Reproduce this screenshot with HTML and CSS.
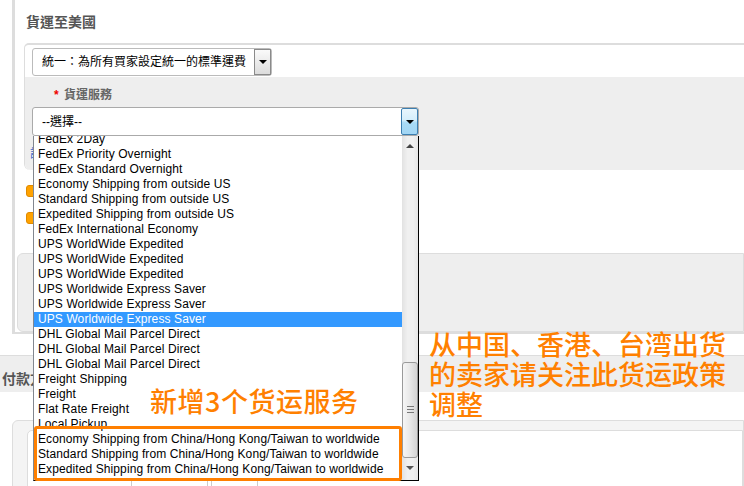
FILE: index.html
```html
<!DOCTYPE html>
<html>
<head>
	<meta charset="UTF-8" />
	<title>貨運設定</title>
	<link rel="stylesheet" href="styles.css">
</head>
<body>
<div id="wrap">

    <div id="ship_section">
        <div class="ship_head">貨運至美國</div>
        <div class="rate_box">
            <div class="rate_top">
                <div class="fake_select sel_type">
                    <span class="sel_text">統一：為所有買家設定統一的標準運費</span>
                    <span class="sel_btn"><i class="tri"></i></span>
                </div>
            </div>
            <div class="rate_body">
                <div class="field_label"><span class="req">*</span> 貨運服務</div>
                <div class="fake_select sel_service">
                    <span class="sel_text">--選擇--</span>
                    <span class="sel_btn sel_btn_on"><i class="tri"></i></span>

                    <div class="drop_list">
                        <ul class="drop_items">
                            <li>FedEx 2Day</li>
                            <li>FedEx Priority Overnight</li>
                            <li>FedEx Standard Overnight</li>
                            <li>Economy Shipping from outside US</li>
                            <li>Standard Shipping from outside US</li>
                            <li>Expedited Shipping from outside US</li>
                            <li>FedEx International Economy</li>
                            <li>UPS WorldWide Expedited</li>
                            <li>UPS WorldWide Expedited</li>
                            <li>UPS WorldWide Expedited</li>
                            <li>UPS Worldwide Express Saver</li>
                            <li>UPS Worldwide Express Saver</li>
                            <li class="on">UPS Worldwide Express Saver</li>
                            <li>DHL Global Mail Parcel Direct</li>
                            <li>DHL Global Mail Parcel Direct</li>
                            <li>DHL Global Mail Parcel Direct</li>
                            <li>Freight Shipping</li>
                            <li>Freight</li>
                            <li>Flat Rate Freight</li>
                            <li>Local Pickup</li>
                            <li>Economy Shipping from China/Hong Kong/Taiwan to worldwide</li>
                            <li>Standard Shipping from China/Hong Kong/Taiwan to worldwide</li>
                            <li>Expedited Shipping from China/Hong Kong/Taiwan to worldwide</li>
                        </ul>
                        <div class="scroll_bar">
                            <i class="arr_up"></i>
                            <div class="thumb"><b></b><b></b><b></b></div>
                            <i class="arr_down"></i>
                        </div>
                    </div>
                </div>
                <a class="add_link" href="#">設定更多運費</a>
            </div>
        </div>
        <div class="opt_rows">
            <div class="opt_row"><span class="opt_icon"></span></div>
            <div class="opt_row"><span class="opt_icon"></span></div>
        </div>
        <div class="grey_box"></div>
    </div>

    <div class="pay_head">付款方式</div>
    <div class="pay_box">
        <div class="pay_inner">
            <span class="pay_btn"></span>
            <span class="pay_btn pay_btn_s"></span>
        </div>
    </div>

    <div class="mark_box"></div>
    <div class="note note_new">新增3个货运服务</div>
    <div class="note note_tip">从中国、香港、台湾出货<br>的卖家请关注此货运政策<br>调整</div>

</div>
</body>
</html>
```

FILE: styles.css
```css
body{
    margin: 0;
    background: #fff;
    font-family: "Liberation Sans", "Noto Sans CJK TC", sans-serif;
    font-size: 12px;
    color: #000;
}

#wrap{
    position: relative;
    width: 744px;
    height: 486px;
    overflow: hidden;
}

#ship_section{
    margin-left: 12px;
    height: 332px;
    border-left: 3px solid #ddd;
    border-bottom: 2px solid #ddd;
    padding-left: 9px;
}

.ship_head{
    height: 29px;
    padding: 14px 0 0 2px;
    font-size: 14px;
    line-height: 16px;
    font-weight: bold;
    color: #555;
}

.rate_box{
    border-top: 2px solid #ddd;
    border-left: 1px solid #ddd;
    border-radius: 5px 0 0 6px;
}

.rate_top{
    height: 29px;
    padding: 3px 0 0 7px;
    background: #fff;
    border-top-left-radius: 5px;
}

.rate_body{
    height: 83px;
    padding: 10px 0 0 7px;
    background: #eee;
    border-bottom-left-radius: 6px;
}

.fake_select{
    display: flex;
    align-items: center;
    box-sizing: border-box;
    height: 28px;
    border: 1px solid #bbb;
    border-radius: 3px;
    background: #fff;
}

.sel_type{
    width: 240px;
}

.sel_service{
    position: relative;
    width: 387px;
    height: 29px;
    border-color: #aaa;
}

.sel_text{
    flex: 1;
    padding-left: 9px;
    line-height: 16px;
}

.sel_btn{
    display: flex;
    align-items: center;
    justify-content: center;
    box-sizing: border-box;
    width: 17px;
    height: 26px;
    border: 1px solid #8a8a8a;
    background: linear-gradient(#fafafa, #dcdcdc);
}

.sel_btn_on{
    height: 27px;
    border-color: #3c7fb1;
    border-radius: 2px;
    background: linear-gradient(#e8f6fd 0%, #d4eefb 45%, #a9dbf6 55%, #a2d6f4 100%);
}

.tri{
    width: 0;
    height: 0;
    border-left: 4px solid transparent;
    border-right: 4px solid transparent;
    border-top: 4px solid #000;
}

.field_label{
    height: 16px;
    margin: 0 0 4px 22px;
    font-size: 12px;
    line-height: 16px;
    font-weight: bold;
    color: #666;
}

.field_label .req{
    color: #e00;
    margin-right: 2px;
}

.add_link{
    display: block;
    margin: 10px 0 0 -2px;
    color: #36c;
    text-decoration: none;
    line-height: 16px;
}

/* dropdown list */
.drop_list{
    position: absolute;
    left: 0;
    top: 28px;
    width: 384px;
    height: 344px;
    border-left: 1px solid #828790;
    border-right: 1px solid #000;
    border-bottom: 1px solid #000;
    background: #fff;
    overflow: hidden;
    z-index: 5;
}

.drop_items{
    list-style: none;
    margin: -4px 16px 0 0;
    padding: 0;
}

.drop_items li{
    height: 15px;
    padding-left: 4px;
    line-height: 15px;
    letter-spacing: 0.1px;
    white-space: nowrap;
    color: #000;
}

.drop_items li.on{
    background: #3399ff;
    color: #fff;
}

.scroll_bar{
    position: absolute;
    top: 0;
    right: 0;
    bottom: 0;
    width: 16px;
    background: linear-gradient(to right, #e2e2e2, #f0f0f0 35%, #f0f0f0 70%, #e6e6e6);
}

.arr_up,
.arr_down{
    position: absolute;
    left: 4px;
    width: 0;
    height: 0;
    border-left: 4px solid transparent;
    border-right: 4px solid transparent;
}

.arr_up{
    top: 8px;
    border-bottom: 4px solid #444;
}

.arr_down{
    bottom: 10px;
    border-top: 4px solid #555;
}

.thumb{
    position: absolute;
    top: 226px;
    left: 0;
    box-sizing: border-box;
    width: 16px;
    height: 96px;
    padding-top: 43px;
    border: 1px solid #9a9a9a;
    border-radius: 3px;
    background: linear-gradient(to right, #f6f6f6, #e8e8e8 50%, #d4d4d4);
}

.thumb b{
    display: block;
    width: 7px;
    height: 1px;
    margin: 0 auto 2px;
    background: #777;
}

/* page content behind the list */
.opt_rows{
    height: 83px;
}

.opt_row{
    height: 12px;
    padding-top: 15px;
}

.opt_icon{
    display: block;
    box-sizing: border-box;
    width: 12px;
    height: 12px;
    margin-left: 2px;
    border: 1px solid #e08a00;
    border-radius: 3px;
    background: #ffa200;
}

.grey_box{
    box-sizing: border-box;
    height: 79px;
    margin-left: -7px;
    border: 1px solid #ddd;
    border-radius: 6px 0 0 6px;
    background: #eee;
}

.pay_head{
    height: 21px;
    margin-top: 21px;
    padding: 15px 0 0 2px;
    border-top: 1px solid #ddd;
    background: #eee;
    font-size: 14px;
    line-height: 16px;
    font-weight: bold;
    color: #555;
}

.pay_box{
    height: 80px;
    margin: 28px 0 0 12px;
    border: 1px solid #ddd;
    border-radius: 6px 0 0 0;
    background: #f4f4f4;
}

.pay_inner{
    height: 70px;
    margin: 9px 0 0 14px;
    border: 1px solid #ddd;
    border-radius: 5px 0 0 0;
    background: #fff;
}

.pay_btn{
    display: inline-block;
    width: 75px;
    height: 20px;
    margin: 47px 0 0 103px;
    border: 1px solid #ccc;
    border-radius: 3px;
}

.pay_btn_s{
    width: 45px;
    margin-left: 0;
}

/* annotations */
.mark_box{
    position: absolute;
    left: 34px;
    top: 426px;
    box-sizing: border-box;
    width: 368px;
    height: 55px;
    border: 3px solid #ff7f00;
    border-radius: 3px;
    z-index: 8;
}

.note{
    position: absolute;
    font-family: "Noto Sans CJK SC", sans-serif;
    font-size: 27px;
    line-height: 30px;
    font-weight: 500;
    color: #ff8000;
    white-space: nowrap;
    z-index: 9;
}

.note_new{
    left: 150px;
    top: 386px;
    letter-spacing: 0.5px;
}

.note_tip{
    left: 429px;
    top: 329px;
}
```
